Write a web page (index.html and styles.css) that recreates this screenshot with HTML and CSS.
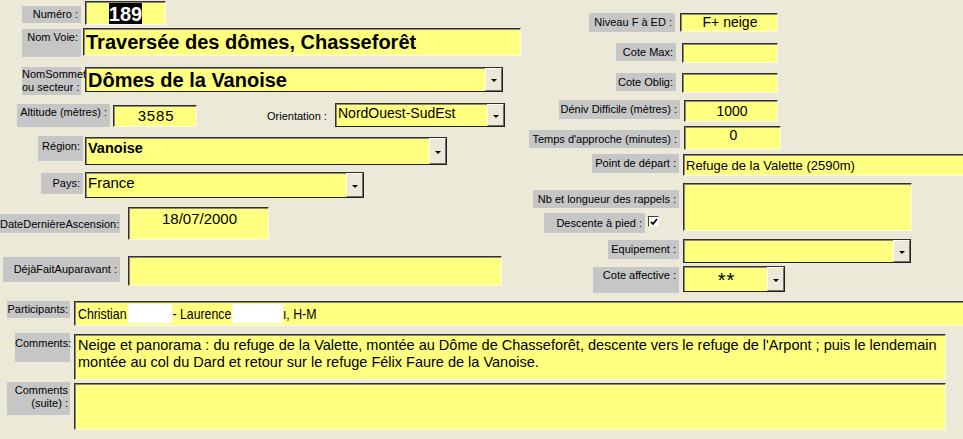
FILE: index.html
```html
<!DOCTYPE html>
<html lang="fr">

<head>
    <meta charset="UTF-8">
    <meta name="viewport" content="width=device-width, initial-scale=1.0">
    <title>Voies</title>
    <link rel="stylesheet" href="styles.css">
</head>

<body>
    <div class="form">
        <div class="top">
            <div class="col-left">
                <div class="row r-num">
                    <div class="lbl l-num">Numéro :</div>
                    <div class="fld f-num"><span class="sel">189</span></div>
                </div>
                <div class="row r-voie">
                    <div class="lbl l-voie">Nom Voie:</div>
                    <div class="fld f-voie">Traversée des dômes, Chasseforêt</div>
                </div>
                <div class="row r-som">
                    <div class="lbl l-som">NomSommet<br>ou secteur :</div>
                    <div class="fld combo f-som">
                        <div class="val">Dômes de la Vanoise</div>
                        <div class="btn"><i></i></div>
                    </div>
                </div>
                <div class="row r-alt">
                    <div class="lbl l-alt">Altitude (mètres) :</div>
                    <div class="fld f-alt">3585</div>
                    <div class="plain l-ori">Orientation :</div>
                    <div class="fld combo f-ori">
                        <div class="val">NordOuest-SudEst</div>
                        <div class="btn"><i></i></div>
                    </div>
                </div>
                <div class="row r-reg">
                    <div class="lbl l-reg">Région:</div>
                    <div class="fld combo f-reg">
                        <div class="val">Vanoise</div>
                        <div class="btn"><i></i></div>
                    </div>
                </div>
                <div class="row r-pays">
                    <div class="lbl l-pays">Pays:</div>
                    <div class="fld combo f-pays">
                        <div class="val">France</div>
                        <div class="btn"><i></i></div>
                    </div>
                </div>
                <div class="row r-date">
                    <div class="lbl l-date">DateDernièreAscension:</div>
                    <div class="fld f-date">18/07/2000</div>
                </div>
                <div class="row r-deja">
                    <div class="lbl l-deja">DéjàFaitAuparavant :</div>
                    <div class="fld f-deja"></div>
                </div>
            </div>

            <div class="col-right">
                <div class="row r-niv">
                    <div class="lbl l-niv">Niveau F à ED :</div>
                    <div class="fld f-niv">F+ neige</div>
                </div>
                <div class="row r-max">
                    <div class="lbl l-max">Cote Max:</div>
                    <div class="fld f-max"></div>
                </div>
                <div class="row r-obl">
                    <div class="lbl l-obl">Cote Oblig:</div>
                    <div class="fld f-obl"></div>
                </div>
                <div class="row r-den">
                    <div class="lbl l-den">Déniv Difficile (mètres) :</div>
                    <div class="fld f-den">1000</div>
                </div>
                <div class="row r-tps">
                    <div class="lbl l-tps">Temps d'approche (minutes) :</div>
                    <div class="fld f-tps">0</div>
                </div>
                <div class="row r-dep">
                    <div class="lbl l-dep">Point de départ :</div>
                    <div class="fld f-dep">Refuge de la Valette (2590m)</div>
                </div>
                <div class="row r-rap">
                    <div class="stack">
                        <div class="lbl l-rap">Nb et longueur des rappels :</div>
                        <div class="desc">
                            <div class="lbl l-desc">Descente à pied :</div>
                            <div class="check">
                                <svg width="8" height="8" viewBox="0 0 8 8"><polyline points="1,4 3,6 7,1" fill="none" stroke="#000" stroke-width="1.8"/></svg>
                            </div>
                        </div>
                    </div>
                    <div class="fld f-rap"></div>
                </div>
                <div class="row r-equ">
                    <div class="lbl l-equ">Equipement :</div>
                    <div class="fld combo f-equ">
                        <div class="val"></div>
                        <div class="btn"><i></i></div>
                    </div>
                </div>
                <div class="row r-aff">
                    <div class="lbl l-aff">Cote affective :</div>
                    <div class="fld combo f-aff">
                        <div class="val">**</div>
                        <div class="btn"><i></i></div>
                    </div>
                </div>
            </div>
        </div>

        <div class="bottom">
            <div class="row r-part">
                <div class="lbl l-part">Participants:</div>
                <div class="fld f-part">
                    <div class="narrow">Christian<span class="hide h1"></span>- Laurence<span class="hide h2"></span>ı, H-M</div>
                </div>
            </div>
            <div class="row r-com">
                <div class="lbl l-com">Comments:</div>
                <div class="fld f-com">Neige et panorama : du refuge de la Valette, montée au Dôme de Chasseforêt, descente vers le refuge de l'Arpont ; puis le lendemain montée au col du Dard et retour sur le refuge Félix Faure de la Vanoise.</div>
            </div>
            <div class="row r-suite">
                <div class="lbl l-suite">Comments<br>(suite) :</div>
                <div class="fld f-suite"></div>
            </div>
        </div>
    </div>
</body>

</html>
```

FILE: styles.css
```css
* {
    padding: 0;
    margin: 0;
    box-sizing: border-box;
}

body {
    background-color: #ece9d8;
    width: 963px;
    height: 439px;
    overflow: hidden;
    font-family: "Liberation Sans", Arial, sans-serif;
    color: #000;
}

.top {
    display: flex;
    height: 301px;
}

.col-left {
    width: 529px;
    flex: none;
}

.col-right {
    padding-top: 13px;
    flex: none;
    width: 434px;
}

.row {
    display: flex;
    align-items: flex-start;
    flex: none;
}

/* grey label boxes */
.lbl {
    background-color: #c6c6c6;
    font-size: 11px;
    line-height: 13px;
    text-align: right;
    padding: 2px 3px 0 0;
    white-space: nowrap;
    flex: none;
}

.plain {
    font-size: 11px;
    line-height: 13px;
    white-space: nowrap;
    flex: none;
}

/* yellow sunken fields */
.fld {
    background-color: #ffff80;
    border: 1px solid;
    border-color: #303030 #f8f8f0 #f8f8f0 #303030;
    box-shadow: inset 1px 1px 0 #8a8a70;
    font-size: 14px;
    line-height: 17px;
    padding: 1px 0 0 2px;
    white-space: nowrap;
    overflow: hidden;
    flex: none;
}

.combo {
    display: flex;
    padding: 0;
    border-right-color: #202020;
    border-bottom-color: #202020;
}

.combo .val {
    flex: 1;
    padding: 1px 0 0 2px;
    overflow: hidden;
}

.combo .btn {
    width: 17px;
    flex: none;
    background-color: #ece9d8;
    border: 1px solid;
    border-color: #ffffff #707070 #707070 #ffffff;
    display: flex;
    align-items: center;
    justify-content: center;
}

.combo .btn i {
    display: block;
    width: 0;
    height: 0;
    border-left: 3px solid transparent;
    border-right: 3px solid transparent;
    border-top: 3px solid #000;
    margin-top: 2px;
}

/* left column */
.r-num { margin-top: 1px; height: 27px; }
.l-num { margin: 5px 0 0 22px; width: 59px; height: 17px; }
.f-num { margin-left: 4px; width: 81px; height: 24px; text-align: center; padding: 1px 0 0 0; }
.sel {
    display: inline-block;
    background-color: #000;
    color: #fff;
    font-weight: bold;
    font-size: 20px;
    line-height: 22px;
}

.r-voie { height: 39px; }
.l-voie { margin: 1px 0 0 22px; width: 59px; height: 28px; }
.f-voie { margin-left: 2px; width: 438px; height: 28px; font-size: 20px; font-weight: bold; line-height: 24px; }

.r-som { height: 36px; }
.l-som { margin-left: 22px; width: 59px; height: 28px; padding-top: 1px; line-height: 13px; }
.f-som { margin-left: 4px; width: 418px; height: 25px; }
.f-som .val { font-size: 20px; font-weight: bold; line-height: 22px; }

.r-alt { height: 33px; }
.l-alt { margin: 1px 0 0 17px; width: 93px; height: 23px; }
.f-alt { margin: 2px 0 0 3px; width: 84px; height: 22px; text-align: center; font-size: 15px; letter-spacing: 0.8px; }
.l-ori { margin: 7px 0 0 70px; width: 61px; }
.f-ori { margin-left: 7px; width: 170px; height: 24px; }

.r-reg { height: 36px; }
.l-reg { margin-left: 38px; width: 45px; height: 25px; padding-top: 4px; }
.f-reg { margin: 1px 0 0 2px; width: 362px; height: 28px; }
.f-reg .val { font-weight: bold; font-size: 14.5px; padding-top: 2px; }

.r-pays { height: 35px; }
.l-pays { margin: 1px 0 0 41px; width: 42px; height: 21px; padding-top: 4px; }
.f-pays { margin-left: 2px; width: 279px; height: 26px; }
.f-pays .val { font-size: 15px; }

.r-date { height: 49px; }
.l-date { margin-top: 7px; width: 120px; height: 19px; padding-top: 4px; padding-right: 2px; }
.f-date { margin-left: 8px; width: 141px; height: 33px; text-align: center; font-size: 15px; padding-top: 2px; }

.r-deja { height: 31px; }
.l-deja { margin: 1px 0 0 3px; width: 117px; height: 25px; padding-top: 6px; }
.f-deja { margin-left: 8px; width: 374px; height: 30px; }

/* right column */
.r-niv { height: 30px; }
.l-niv { margin-left: 60px; width: 86px; height: 19px; padding-top: 3px; }
.f-niv { margin-left: 5px; width: 98px; height: 19px; text-align: center; padding-top: 0; }

.r-max { height: 30px; }
.l-max { margin-left: 87px; width: 60px; height: 18px; padding-top: 3px; }
.f-max { margin-left: 6px; width: 96px; height: 20px; }

.r-obl { height: 27px; }
.l-obl { margin-left: 87px; width: 60px; height: 18px; padding-top: 3px; }
.f-obl { margin-left: 6px; width: 96px; height: 20px; }

.r-den { height: 26px; }
.l-den { margin-left: 30px; width: 121px; height: 19px; padding-top: 3px; }
.f-den { margin-left: 4px; width: 94px; height: 22px; text-align: center; padding-top: 2px; }

.r-tps { height: 28px; }
.l-tps { margin-top: 4px; width: 151px; height: 18px; padding-top: 3px; }
.f-tps { margin-left: 4px; width: 97px; height: 24px; text-align: center; padding-top: 0; }

.r-dep { height: 29px; }
.l-dep { margin-left: 63px; width: 87px; height: 19px; padding-top: 3px; }
.f-dep { margin-left: 4px; width: 300px; height: 22px; font-size: 13px; padding-top: 2px; }

.r-rap { height: 56px; }
.stack { width: 150px; flex: none; }
.l-rap { margin: 7px 0 0 4px; width: 146px; height: 18px; padding-top: 3px; }
.desc { display: flex; align-items: flex-start; margin-top: 5px; }
.l-desc { margin-left: 15px; width: 101px; height: 20px; padding-top: 4px; }
.check {
    margin: 3px 0 0 3px;
    width: 11px;
    height: 11px;
    background-color: #fff;
    border: 1px solid;
    border-color: #404040 #f0f0f0 #f0f0f0 #404040;
    display: flex;
    align-items: center;
    justify-content: center;
}
.f-rap { margin-left: 4px; width: 229px; height: 48px; }

.r-equ { height: 27px; }
.l-equ { margin: 1px 0 0 79px; width: 71px; height: 19px; padding-top: 3px; }
.f-equ { margin-left: 4px; width: 228px; height: 24px; }

.l-aff { margin: 1px 0 0 64px; width: 86px; height: 26px; padding-top: 2px; }
.f-aff { margin-left: 4px; width: 102px; height: 26px; }
.f-aff .val { text-align: center; font-size: 20px; line-height: 20px; letter-spacing: 1px; padding-top: 3px; }

/* bottom rows */
.r-part { height: 32px; }
.l-part { margin-left: 7px; width: 63px; height: 17px; padding-top: 2px; padding-right: 2px; }
.f-part {
    margin-left: 4px;
    width: 900px;
    height: 25px;
    padding: 2px 0 0 3px;
}
.narrow {
    display: flex;
    align-items: flex-start;
    font-size: 15px;
    line-height: 19px;
    transform: scaleX(0.82);
    transform-origin: left top;
}
.hide {
    display: block;
    flex: none;
    background-color: #fff;
    height: 19px;
}
.h1 { width: 54px; margin-left: 2px; }
.h2 { width: 62px; margin-left: 1px; }

.r-com { height: 49px; }
.l-com { margin-left: 15px; width: 55px; height: 29px; padding-top: 4px; padding-right: 2px; }
.f-com { margin: 1px 0 0 4px; width: 872px; height: 46px; white-space: normal; padding: 2px 4px 0 3px; line-height: 17px; font-size: 14.5px; }

.l-suite { margin-left: 7px; width: 63px; height: 33px; padding-top: 2px; padding-right: 2px; }
.f-suite { margin: 1px 0 0 4px; width: 872px; height: 47px; }
```
